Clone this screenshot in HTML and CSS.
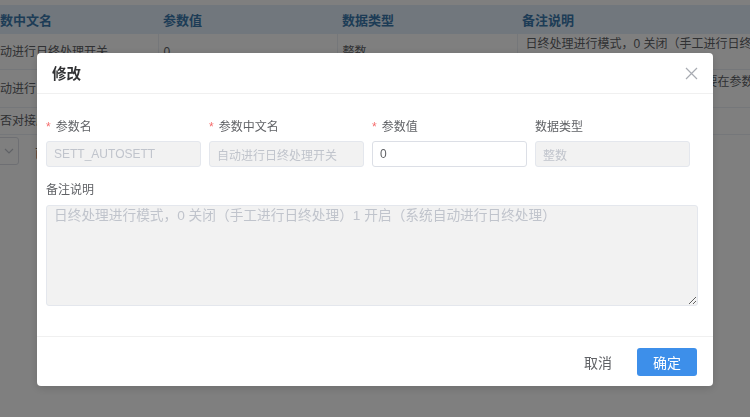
FILE: index.html
```html
<!DOCTYPE html>
<html lang="zh-CN">
<head>
    <meta charset="UTF-8">
    <meta name="viewport" content="width=device-width, initial-scale=1.0">
    <title>系统参数 | 修改</title>
    <link rel="stylesheet" href="styles.css">
</head>
<body>

    <!-- Parameter table (behind the dialog) -->
    <section class="params">
        <table class="param-table">
            <colgroup>
                <col class="col-cn">
                <col class="col-val">
                <col class="col-type">
                <col class="col-note">
            </colgroup>
            <thead>
                <tr>
                    <th>参数中文名</th>
                    <th>参数值</th>
                    <th>数据类型</th>
                    <th>备注说明</th>
                </tr>
            </thead>
            <tbody>
                <tr class="row-1">
                    <td>自动进行日终处理开关</td>
                    <td>0</td>
                    <td>整数</td>
                    <td>日终处理进行模式，0 关闭（手工进行日终处理）1 开启（系统自动进行日终处理）</td>
                </tr>
                <tr class="row-2">
                    <td>自动进行日终对接开关</td>
                    <td>1</td>
                    <td>整数</td>
                    <td>日终处理完成后自动对接应用时需要在参数中配置对接地址及账户信息，否则对接失败</td>
                </tr>
                <tr class="row-3">
                    <td>是否对接应用系统</td>
                    <td>0</td>
                    <td>整数</td>
                    <td>0 否 1 是</td>
                </tr>
            </tbody>
        </table>

        <!-- Pager -->
        <div class="pager">
            <div class="page-size">
                <svg width="10" height="6" viewBox="0 0 10 6"><path d="M1 1l4 4 4-4" fill="none" stroke="#c0c4cc" stroke-width="1.2"/></svg>
            </div>
            <span class="jump">前往</span>
        </div>
    </section>

    <!-- Edit Dialog -->
    <div class="mask">
        <div class="dialog">
            <div class="dialog-header">
                <span class="dialog-title">修改</span>
                <svg class="dialog-close" width="13" height="13" viewBox="0 0 13 13"><path d="M1 1l11 11M12 1L1 12" stroke="#a8abb2" stroke-width="1.2"/></svg>
            </div>

            <div class="dialog-body">
                <div class="form-row">
                    <div class="form-item">
                        <label class="required">参数名</label>
                        <input type="text" value="SETT_AUTOSETT" disabled>
                    </div>
                    <div class="form-item">
                        <label class="required">参数中文名</label>
                        <input type="text" value="自动进行日终处理开关" disabled>
                    </div>
                    <div class="form-item">
                        <label class="required">参数值</label>
                        <input type="text" value="0">
                    </div>
                    <div class="form-item">
                        <label>数据类型</label>
                        <input type="text" value="整数" disabled>
                    </div>
                </div>

                <div class="form-item full">
                    <label>备注说明</label>
                    <textarea disabled>日终处理进行模式，0 关闭（手工进行日终处理）1 开启（系统自动进行日终处理）</textarea>
                </div>
            </div>

            <div class="dialog-footer">
                <button class="btn-text">取消</button>
                <button class="btn-primary">确定</button>
            </div>
        </div>
    </div>
    <!-- Edit Dialog End -->

</body>
</html>
```

FILE: styles.css
```css
/* Reset some default browser styles */
body, table, th, td {
    margin: 0;
    padding: 0;
    box-sizing: border-box;
}

/* Basic font and background */
body {
    font-family: "Liberation Sans", "Noto Sans CJK SC", sans-serif;
    background-color: #fff;
    color: #606266;
    overflow: hidden;
}

/* Parameter table */
.params {
    padding-top: 5px;
    overflow: hidden;
}

.param-table {
    margin-left: -23px;
    width: 961px;
    table-layout: fixed;
    border-collapse: collapse;
    font-size: 12px;
}

.param-table .col-cn { width: 181px; }
.param-table .col-val { width: 179px; }
.param-table .col-type { width: 180px; }
.param-table .col-note { width: 421px; }

.param-table th {
    height: 29px;
    padding: 0 10px;
    text-align: left;
    font-size: 13px;
    font-weight: bold;
    color: #3a78ad;
    background-color: #e2effa;
    white-space: nowrap;
    overflow: hidden;
}

.param-table th + th {
    padding-left: 5px;
}

.param-table td {
    padding: 1px 11px;
    line-height: 16px;
    border-bottom: 1px solid #ebeef5;
    border-right: 1px solid #ebeef5;
    white-space: nowrap;
    overflow: hidden;
    vertical-align: middle;
}

.param-table td + td {
    padding-left: 5px;
}

.param-table td:last-child {
    white-space: normal;
    vertical-align: top;
    padding-top: 2px;
    padding-left: 8px;
}

.param-table .row-1 td { height: 35px; }
.param-table .row-2 td { height: 37px; }
.param-table .row-3 td { height: 27px; }
.param-table .row-2 td:last-child { padding-top: 4px; }

/* Pager */
.pager {
    display: flex;
    align-items: center;
    gap: 16px;
    margin-top: 2px;
    font-size: 13px;
}

.page-size {
    width: 60px;
    height: 28px;
    margin-left: -41px;
    border: 1px solid #dcdfe6;
    border-radius: 3px;
    display: flex;
    align-items: center;
    justify-content: flex-end;
    padding-right: 4px;
    box-sizing: border-box;
}

/* Dialog mask */
.mask {
    position: fixed;
    inset: 0;
    background-color: rgba(0, 0, 0, 0.5);
    display: flex;
    justify-content: center;
    align-items: flex-start;
    padding-top: 53px;
}

.dialog {
    width: 676px;
    background-color: #fff;
    border-radius: 4px;
    box-shadow: 0 2px 10px rgba(0, 0, 0, 0.15);
}

/* Dialog header */
.dialog-header {
    height: 40px;
    padding: 0 15px;
    display: flex;
    align-items: center;
    justify-content: space-between;
    border-bottom: 1px solid #f0f0f0;
}

.dialog-title {
    font-size: 14.5px;
    font-weight: bold;
    color: #303133;
    margin-top: -2px;
}

/* Dialog body */
.dialog-body {
    padding: 25px 15px 30px 9px;
    border-bottom: 1px solid #f0f0f0;
}

.form-row {
    display: grid;
    grid-template-columns: repeat(4, 1fr);
    margin-bottom: 15px;
}

.form-item {
    display: flex;
    flex-direction: column;
}

.form-row .form-item {
    padding-right: 8px;
}

.form-item label {
    font-size: 12px;
    line-height: 16px;
    margin-bottom: 6px;
    color: #606266;
}

.form-item label.required::before {
    content: "*";
    color: #f56c6c;
    margin-right: 5px;
}

.form-item input {
    height: 26px;
    padding: 0 7px;
    border: 1px solid #dcdfe6;
    border-radius: 3px;
    font-family: inherit;
    font-size: 12px;
    color: #606266;
    background-color: #fff;
    box-sizing: border-box;
    width: 100%;
}

.form-item input:disabled {
    background-color: #f2f2f2;
    border-color: #e4e7ed;
    color: #c0c4cc;
}

.form-item.full label {
    margin-bottom: 7px;
}

.form-item textarea {
    height: 101px;
    padding: 1px 7px;
    border: 1px solid #e4e7ed;
    border-radius: 3px;
    background-color: #f2f2f2;
    color: #c0c4cc;
    font-family: inherit;
    font-size: 13.7px;
    line-height: 18px;
    box-sizing: border-box;
    width: 100%;
    resize: vertical;
}

/* Dialog footer */
.dialog-footer {
    height: 49px;
    padding: 0 16px;
    display: flex;
    align-items: center;
    justify-content: flex-end;
    gap: 25px;
}

.btn-text {
    border: none;
    background: none;
    padding: 0;
    font-family: inherit;
    font-size: 14px;
    color: #606266;
    cursor: pointer;
}

.btn-primary {
    height: 28px;
    padding: 0 16px;
    border: none;
    border-radius: 3px;
    background-color: #3d8fea;
    color: #fff;
    font-family: inherit;
    font-size: 14px;
    cursor: pointer;
}
```
